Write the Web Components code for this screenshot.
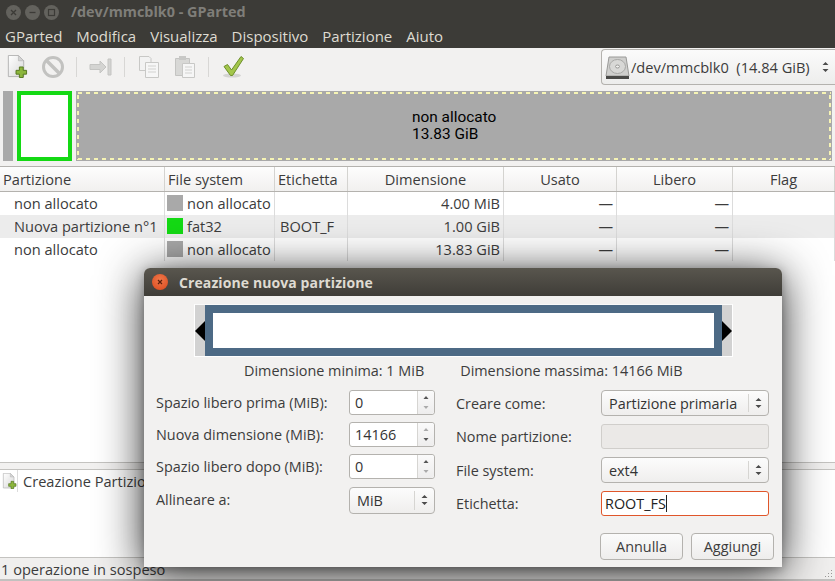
<!DOCTYPE html>
<html>
<head>
<meta charset="utf-8">
<title>GParted</title>
<style>
  html, body { margin: 0; padding: 0; width: 835px; height: 581px; overflow: hidden; background: #f2f1f0; }
  body { font-family: "Open Sans", "Noto Sans", sans-serif; font-size: 14.6px; color: #3c3c3c; position: relative; }
  gp-app { position: relative; }
</style>
</head>
<body>
<gp-app>
  <gp-titlebar>/dev/mmcblk0 - GParted</gp-titlebar>
  <gp-menubar items='["GParted","Modifica","Visualizza","Dispositivo","Partizione","Aiuto"]'></gp-menubar>
  <gp-toolbar></gp-toolbar>
  <gp-diskmap></gp-diskmap>
  <gp-table></gp-table>
  <gp-oplist>Creazione Partizione</gp-oplist>
  <gp-statusbar>1 operazione in sospeso</gp-statusbar>
</gp-app>
<gp-dialog></gp-dialog>

<script>
const newDocIcon = (size) =>
  '<svg width="' + size + '" height="' + size + '" viewBox="0 0 24 24">' +
  '<defs><linearGradient id="pg" x1="0" y1="0" x2="1" y2="1"><stop offset="0" stop-color="#fff"/><stop offset="1" stop-color="#d8d8d8"/></linearGradient></defs>' +
  '<path d="M3.5 .5H14L19.5 6V22.5H3.5Z" fill="url(#pg)" stroke="#b4b4b4"/>' +
  '<path d="M14 .5V6H19.5Z" fill="#d4d4d4" stroke="#b4b4b4" stroke-width=".7"/>' +
  '<path d="M15 12.5h4v3.500h3.500v4h-3.500v3.500h-4v-3.500h-3.500v-4h3.500Z" fill="#8cb63c" stroke="#55761f"/>' +
  '</svg>';

class GpApp extends HTMLElement {
  constructor() {
    super();
    this.attachShadow({ mode: "open" });
    this.shadowRoot.innerHTML =
      "<style>:host { display: flex; flex-direction: column; width: 835px; height: 581px; }</style><slot></slot>";
  }
}

class GpTitlebar extends HTMLElement {
  constructor() {
    super();
    this.attachShadow({ mode: "open" });
    this.shadowRoot.innerHTML = `<style>
      :host { display: flex; align-items: center; height: 24px; background: #3c3b37; color: #7f7e79; font-weight: 700; font-size: 14.4px; flex: none; }
      .btns { display: flex; gap: 4px; padding-left: 6px; width: 66px; box-sizing: border-box; }
      .b { width: 15px; height: 15px; border-radius: 50%; background: #63625d; display: flex; align-items: center; justify-content: center; }
      .title { padding-left: 5px; padding-bottom: 1px; }
    </style>
    <div class="btns">
      <div class="b"><svg width="9" height="9" viewBox="0 0 9 9"><path d="M2 2L7 7M7 2L2 7" stroke="#3c3b37" stroke-width="1.300"/></svg></div>
      <div class="b"><svg width="9" height="9" viewBox="0 0 9 9"><path d="M1.500 4.500H7.500" stroke="#3c3b37" stroke-width="1.300"/></svg></div>
      <div class="b"><svg width="9" height="9" viewBox="0 0 9 9"><rect x="1.500" y="1.500" width="6" height="6" fill="none" stroke="#3c3b37" stroke-width="1.200"/></svg></div>
    </div>
    <div class="title"><slot></slot></div>`;
  }
}

class GpMenubar extends HTMLElement {
  constructor() {
    super();
    this.attachShadow({ mode: "open" });
    const items = JSON.parse(this.getAttribute("items") || "[]");
    this.shadowRoot.innerHTML = `<style>
      :host { display: flex; align-items: center; height: 24px; background: #3c3b37; color: #dfdbd2; font-size: 15px; padding-left: 5px; gap: 14px; flex: none; }
    </style>` + items.map((i) => "<span>" + i + "</span>").join("");
  }
}

class GpToolbar extends HTMLElement {
  constructor() {
    super();
    this.attachShadow({ mode: "open" });
    this.shadowRoot.innerHTML = `<style>
      :host { display: flex; align-items: center; height: 37px; background: #f2f1f0; flex: none; box-sizing: border-box; padding-left: 5px; }
      svg { display: block; flex: none; }
      .sep { width: 1px; height: 20px; background: #d8d7d5; flex: none; }
      .combo { margin-left: auto; align-self: flex-end; width: 234px; height: 36px; box-sizing: border-box; border: 1px solid #b4b2ae; border-right: 0; border-radius: 4px 0 0 4px;
        background: linear-gradient(#fbfbfb, #ededec); display: flex; align-items: center; padding-left: 3px; gap: 1px; font-size: 14.6px; color: #3c3c3c; white-space: pre; }
      .arrows { margin-left: auto; margin-right: 5px; }
    </style>
    ${newDocIcon(23)}
    <svg style="margin-left:13px" width="24" height="24" viewBox="0 0 24 24"><circle cx="12" cy="12" r="9.500" fill="none" stroke="#c2c2c0" stroke-width="3"/><path d="M5.500 5.500L18.500 18.500" stroke="#c2c2c0" stroke-width="3.500"/></svg>
    <div class="sep" style="margin-left:11px"></div>
    <svg style="margin-left:12px" width="24" height="24" viewBox="0 0 24 24"><path d="M1 9.500H11V6L17 12L11 18V14.500H1Z" fill="#d4d4d2" stroke="#c4c4c2"/><path d="M19 4H22V20H19Z" fill="#d4d4d2" stroke="#c4c4c2"/></svg>
    <div class="sep" style="margin-left:11px"></div>
    <svg style="margin-left:13px" width="22" height="24" viewBox="0 0 22 24"><path d="M1.500 1.500H11L13 3.500V15.500H1.500Z" fill="#f2f2f2" stroke="#c8c8c6"/><path d="M7.500 7.500H20.500V22.500H7.500Z" fill="#f6f6f6" stroke="#c8c8c6"/><path d="M10 11H18M10 14H18M10 17H18" stroke="#d2d2d0"/></svg>
    <svg style="margin-left:14px" width="22" height="24" viewBox="0 0 22 24"><path d="M1.500 3.500H15.500V20.500H1.500Z" fill="#d8d8d6" stroke="#c4c4c2"/><rect x="5" y="1" width="7" height="4" fill="#c8c8c6"/><path d="M8.500 8.500H20.500V22.500H8.500Z" fill="#f6f6f6" stroke="#c8c8c6"/><path d="M11 12H18M11 15H18M11 18H18" stroke="#d2d2d0"/></svg>
    <div class="sep" style="margin-left:12px"></div>
    <svg style="margin-left:13px" width="24" height="24" viewBox="0 0 24 24"><ellipse cx="10" cy="20.500" rx="9" ry="2" fill="#d4d4d2"/><path d="M2 11.500L5.500 9.500L9.500 15L19 1.500L21.500 3.500L10.500 20.500H8.500Z" fill="#a3c64b" stroke="#6e8f2a"/></svg>
    <div class="combo">
      <svg width="25" height="25" viewBox="0 0 25 25"><path d="M4 2H21L24 21H1Z" fill="#cfcfcd" stroke="#9a9a98"/><ellipse cx="12.500" cy="11.500" rx="8" ry="7" fill="#d8d8d6" stroke="#a8a8a6"/><ellipse cx="12.500" cy="11.500" rx="2" ry="1.500" fill="#efefed" stroke="#9a9a98"/><path d="M1 21H24V24H1Z" fill="#4a4a48"/></svg>
      <span>/dev/mmcblk0&#160;&#160;(14.84 GiB)</span>
      <svg class="arrows" width="9" height="14" viewBox="0 0 9 14"><path d="M1.500 5L4.500 2L7.500 5ZM1.500 9L4.500 12L7.500 9Z" fill="#4c4c4c"/></svg>
    </div>`;
  }
}

class GpDiskmap extends HTMLElement {
  constructor() {
    super();
    this.attachShadow({ mode: "open" });
    const c = "#f6f4b4";
    const h = "repeating-linear-gradient(90deg, transparent 0 1px, " + c + " 1px 5px, transparent 5px 8px)";
    const v = "repeating-linear-gradient(180deg, transparent 0 3px, " + c + " 3px 7px, transparent 7px 8px)";
    this.shadowRoot.innerHTML = `<style>
      :host { display: flex; height: 70px; margin: 6px 3px 0 3px; gap: 4px; flex: none; }
      .sm { width: 10px; background: #a9a9a9; }
      .fat { width: 55px; box-sizing: border-box; border: 4px solid #14d914; background: #fff; }
      .free { flex: 1; background: #a9a9a9; box-sizing: border-box; padding: 1px; display: flex; }
      .in { flex: 1; display: flex; flex-direction: column; justify-content: center; padding-left: 335px; color: #000;
        font-family: Roboto, "Open Sans", sans-serif; font-size: 15.4px; line-height: 17px;
        background: ${h} top / 100% 2px no-repeat, ${h} bottom / 100% 2px no-repeat, ${v} left / 2px 100% no-repeat, ${v} right / 2px 100% no-repeat; }
    </style>
    <div class="sm"></div><div class="fat"></div>
    <div class="free"><div class="in"><span>non allocato</span><span>13.83 GiB</span></div></div>`;
  }
}

class GpTable extends HTMLElement {
  constructor() {
    super();
    this.attachShadow({ mode: "open" });
    const cols = "165px 110px 73px 156px 113px 116px 102px";
    const swatch = (c) => '<i style="background:' + c + '"></i>';
    const rows = [
      ["non allocato", "#a9a9a9", "non allocato", "", "4.00 MiB"],
      ["Nuova partizione n°1", "#14d914", "fat32", "BOOT_F", "1.00 GiB"],
      ["non allocato", "#a9a9a9", "non allocato", "", "13.83 GiB"],
    ];
    const body = rows.map((r, i) =>
      '<div class="row' + (i === 1 ? " alt" : "") + '">' +
      '<div class="c name">' + r[0] + "</div>" +
      '<div class="c fs">' + swatch(r[1]) + "<span>" + r[2] + "</span></div>" +
      '<div class="c lab">' + r[3] + "</div>" +
      '<div class="c r">' + r[4] + "</div>" +
      '<div class="c r">—</div><div class="c r">—</div><div class="c"></div></div>'
    ).join("");
    this.shadowRoot.innerHTML = `<style>
      :host { display: block; margin-top: 5px; height: 297px; box-sizing: border-box; border-top: 1px solid #b4b2ae; border-bottom: 1px solid #c4c3c0; flex: none; background: #fff; }
      .row, .head { display: grid; grid-template-columns: ${cols}; }
      .head { height: 24px; border-bottom: 1px solid #b4b2ae; background: linear-gradient(#fdfdfd, #f1f0ef); }
      .head div { display: flex; align-items: center; justify-content: center; border-right: 1px solid #d4d3d0; white-space: nowrap; overflow: hidden; padding-bottom: 1px; }
      .head div.l { justify-content: flex-start; padding-left: 3px; }
      .row { height: 23px; line-height: 23px; }
      .row.alt { background: #ececec; }
      .c { border-right: 1px solid #dcdcdc; padding: 0 3px; white-space: nowrap; overflow: hidden; display: flex; align-items: center; padding-bottom: 1px; }
      .name { padding-left: 14px; }
      .lab { padding-left: 5px; }
      .r { justify-content: flex-end; }
      .fs { padding-left: 2px; gap: 4px; }
      i { display: block; width: 16px; height: 16px; flex: none; }
    </style>
    <div class="head"><div class="l">Partizione</div><div class="l">File system</div><div class="l">Etichetta</div><div>Dimensione</div><div>Usato</div><div>Libero</div><div>Flag</div></div>
    ${body}`;
  }
}

class GpOplist extends HTMLElement {
  constructor() {
    super();
    this.attachShadow({ mode: "open" });
    this.shadowRoot.innerHTML = `<style>
      :host { display: block; margin-top: 6px; height: 89px; box-sizing: border-box; border-top: 1px solid #c4c3c0; border-bottom: 1px solid #c4c3c0; background: #fff; flex: none; }
      .op { display: flex; align-items: center; height: 22px; white-space: nowrap; }
      .ic { padding-left: 1px; width: 18px; box-sizing: border-box; border-right: 1px solid #dcdcdc; height: 22px; display: flex; align-items: center; margin-right: 5px; }
    </style>
    <div class="op"><div class="ic">${newDocIcon(16)}</div><slot></slot></div>`;
  }
}

class GpStatusbar extends HTMLElement {
  constructor() {
    super();
    this.attachShadow({ mode: "open" });
    this.shadowRoot.innerHTML = `<style>
      :host { display: flex; align-items: center; height: 23px; box-sizing: border-box; background: #f0efee; border-bottom: 2px solid #c2c1bf; flex: none; padding-left: 1px; position: relative; }
      svg { position: absolute; right: 2px; bottom: 0; }
    </style><slot></slot>
    <svg width="10" height="10" viewBox="0 0 10 10"><path d="M8 1h1v1H8zM5 4h1v1H5zM8 4h1v1H8zM2 7h1v1H2zM5 7h1v1H5zM8 7h1v1H8z" fill="#9a9997"/></svg>`;
  }
}

class GpSpin extends HTMLElement {
  constructor() {
    super();
    this.attachShadow({ mode: "open" });
    const up = this.hasAttribute("at-max") ? "#aaa" : "#555";
    const down = this.hasAttribute("at-max") ? "#555" : "#aaa";
    this.shadowRoot.innerHTML = `<style>
      :host { display: flex; height: 25px; width: 86px; box-sizing: border-box; border: 1px solid #b4b2ae; border-radius: 3px; background: #fff; }
      .v { flex: 1; display: flex; align-items: center; padding-left: 5px; color: #333; }
      .a { width: 16px; border-left: 1px solid #d6d5d2; background: linear-gradient(#fafafa, #eeeded); display: flex; align-items: center; justify-content: center; border-radius: 0 3px 3px 0; }
    </style>
    <div class="v"><slot></slot></div>
    <div class="a"><svg width="8" height="17" viewBox="0 0 8 17"><path d="M1.500 5L4 2L6.500 5Z" fill="${up}"/><path d="M1.500 12L4 15L6.500 12Z" fill="${down}"/></svg></div>`;
  }
}

class GpCombo extends HTMLElement {
  constructor() {
    super();
    this.attachShadow({ mode: "open" });
    this.shadowRoot.innerHTML = `<style>
      :host { display: flex; height: 26px; box-sizing: border-box; border: 1px solid #b4b2ae; border-radius: 4px; background: linear-gradient(#fcfcfc, #efeeed); color: #333; }
      .v { flex: 1; display: flex; align-items: center; padding-left: 7px; white-space: nowrap; }
      .a { width: 20px; display: flex; align-items: center; justify-content: center; position: relative; }
      .a::before { content: ""; position: absolute; left: 0; top: 3px; bottom: 3px; width: 1px; background: #d6d5d2; }
    </style>
    <div class="v"><slot></slot></div>
    <div class="a"><svg width="9" height="14" viewBox="0 0 9 14"><path d="M1.500 5L4.500 2L7.500 5ZM1.500 9L4.500 12L7.500 9Z" fill="#4c4c4c"/></svg></div>`;
  }
}

class GpEntry extends HTMLElement {
  constructor() {
    super();
    this.attachShadow({ mode: "open" });
    this.shadowRoot.innerHTML = `<style>
      :host { display: flex; align-items: center; height: 25px; box-sizing: border-box; border: 1px solid #b4b2ae; border-radius: 3px; background: #fff; padding-left: 3px; color: #222; }
      :host([disabled]) { background: #ebe9e7; border-color: #d0cecb; }
      :host([focused]) { border-color: #e0562a; }
      .caret { width: 1px; height: 17px; background: #222; }
    </style>
    <slot></slot>` + (this.hasAttribute("focused") ? '<span class="caret"></span>' : "");
  }
}

class GpButton extends HTMLElement {
  constructor() {
    super();
    this.attachShadow({ mode: "open" });
    this.shadowRoot.innerHTML = `<style>
      :host { display: flex; align-items: center; justify-content: center; height: 27px; box-sizing: border-box; border: 1px solid #b4b2ae; border-radius: 4px; background: linear-gradient(#fbfbfb, #eeedec); color: #3c3c3c; }
    </style><slot></slot>`;
  }
}

class GpDialog extends HTMLElement {
  constructor() {
    super();
    this.attachShadow({ mode: "open" });
    this.shadowRoot.innerHTML = `<style>
      :host { position: absolute; left: 144px; top: 268px; width: 638px; height: 299px; display: flex; flex-direction: column; background: #f2f1f0; border-radius: 6px 6px 0 0; box-shadow: 0 6px 45px rgba(0,0,0,.85), 0 2px 10px rgba(0,0,0,.25); color: #3c3c3c; font-size: 14.4px; }
      .title { height: 28px; flex: none; border-radius: 6px 6px 0 0; background: linear-gradient(#59564e, #3f3d38); display: flex; align-items: center; padding-left: 8px; gap: 11px; color: #dfdbd2; font-weight: 700; font-size: 14px; letter-spacing: .1px; }
      .close { width: 16px; height: 16px; border-radius: 50%; background: radial-gradient(circle at 50% 35%, #f0784a, #d8481c); display: flex; align-items: center; justify-content: center; }
      .bar { display: flex; height: 53px; margin: 8px 49px 0 50px; border: 1px solid #fff; border-top-color: #fafafa; box-sizing: border-box; background: #d2d2d2; }
      .side { width: 10px; position: relative; flex: none; }
      .side svg { position: absolute; top: 16px; }
      .blue { flex: 1; background: #4d6a85; padding: 8px; display: flex; }
      .blue div { flex: 1; background: #fff; }
      .limits { display: flex; height: 27px; align-items: center; padding-left: 100px; flex: none; }
      .limits span:last-child { margin-left: 36px; }
      .form { display: grid; grid-template-columns: 300px 1fr; padding-left: 12px; margin-top: 6px; flex: none; }
      .col { display: grid; align-items: center; align-content: start; }
      .left { grid-template-columns: 193px 86px; grid-template-rows: 25px 25px 25px 27px; row-gap: 7px; }
      .left gp-combo { height: 27px; margin-top: 1px; }
      .right { grid-template-columns: 145px 168px; grid-template-rows: 26px 25px 26px 25px; row-gap: 8px; }
      .right :last-child { margin-top: -1px; }
      .actions { display: flex; justify-content: flex-end; gap: 8px; padding-right: 8px; margin-top: 17px; }
      .actions gp-button { width: 83px; }
    </style>
    <div class="title"><div class="close"><svg width="8" height="8" viewBox="0 0 8 8"><path d="M2 2L6 6M6 2L2 6" stroke="#5a1f0c" stroke-width="1.200"/></svg></div><span>Creazione nuova partizione</span></div>
    <div class="bar">
      <div class="side"><svg width="10" height="20" viewBox="0 0 10 20"><path d="M10 0V20L0 10Z" fill="#000"/></svg></div>
      <div class="blue"><div></div></div>
      <div class="side"><svg width="10" height="20" viewBox="0 0 10 20"><path d="M0 0V20L10 10Z" fill="#000"/></svg></div>
    </div>
    <div class="limits"><span>Dimensione minima: 1 MiB</span><span>Dimensione massima: 14166 MiB</span></div>
    <div class="form">
      <div class="col left">
        <span>Spazio libero prima (MiB):</span><gp-spin>0</gp-spin>
        <span>Nuova dimensione (MiB):</span><gp-spin at-max>14166</gp-spin>
        <span>Spazio libero dopo (MiB):</span><gp-spin>0</gp-spin>
        <span>Allineare a:</span><gp-combo>MiB</gp-combo>
      </div>
      <div class="col right">
        <span>Creare come:</span><gp-combo>Partizione primaria</gp-combo>
        <span>Nome partizione:</span><gp-entry disabled></gp-entry>
        <span>File system:</span><gp-combo>ext4</gp-combo>
        <span>Etichetta:</span><gp-entry focused>ROOT_FS</gp-entry>
      </div>
    </div>
    <div class="actions"><gp-button>Annulla</gp-button><gp-button>Aggiungi</gp-button></div>`;
  }
}

customElements.define("gp-app", GpApp);
customElements.define("gp-titlebar", GpTitlebar);
customElements.define("gp-menubar", GpMenubar);
customElements.define("gp-toolbar", GpToolbar);
customElements.define("gp-diskmap", GpDiskmap);
customElements.define("gp-table", GpTable);
customElements.define("gp-oplist", GpOplist);
customElements.define("gp-statusbar", GpStatusbar);
customElements.define("gp-spin", GpSpin);
customElements.define("gp-combo", GpCombo);
customElements.define("gp-entry", GpEntry);
customElements.define("gp-button", GpButton);
customElements.define("gp-dialog", GpDialog);
</script>
</body>
</html>
